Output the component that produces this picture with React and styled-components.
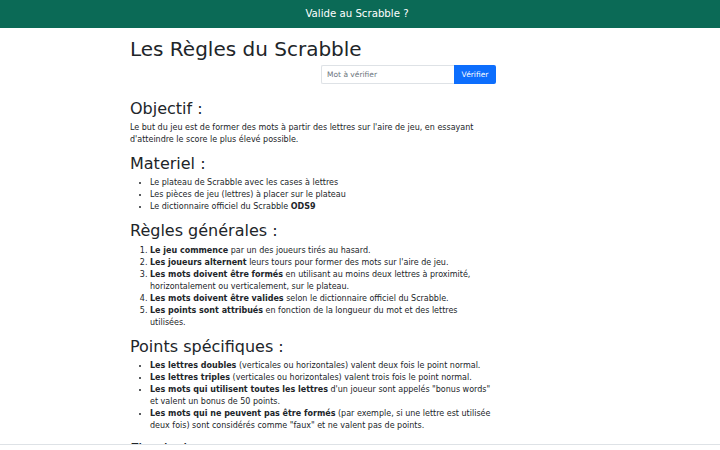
import styled, { createGlobalStyle } from "styled-components";

const GlobalStyle = createGlobalStyle`
  html, body {
    margin: 0;
    padding: 0;
    background: #ffffff;
  }
  body {
    font-family: "DejaVu Sans", "Noto Sans", sans-serif;
    font-size: 8px;
    line-height: 1.5;
    color: #212529;
  }
  * {
    box-sizing: border-box;
  }
`;

const NavBar = styled.header`
  height: 28px;
  background-color: #0b6a56;
  display: flex;
  align-items: center;
  justify-content: center;
`;

const Brand = styled.span`
  color: #ffffff;
  font-size: 10.2px;
  line-height: 1;
  padding-right: 6px;
`;

const Page = styled.main`
  width: 460px;
  margin: 0 auto;
  padding-top: 9px;
`;

const Column = styled.div`
  width: 362px;
`;

const Title = styled.h1`
  margin: 0 0 4px;
  font-size: 20px;
  font-weight: 500;
  line-height: 1.2;
`;

const SearchForm = styled.form`
  display: flex;
  justify-content: flex-end;
  margin-right: -4px;
  margin-bottom: 15px;
`;

const WordInput = styled.input`
  width: 133px;
  height: 19px;
  padding: 0 5px;
  border: 1px solid #dee2e6;
  border-right: none;
  border-radius: 2px 0 0 2px;
  font-family: inherit;
  font-size: 7.5px;
  color: #212529;
  outline: none;

  &::placeholder {
    color: #6c757d;
  }
`;

const CheckButton = styled.button`
  width: 42px;
  height: 19px;
  padding: 0;
  border: none;
  border-radius: 0 2px 2px 0;
  background-color: #0d6efd;
  color: #ffffff;
  font-family: inherit;
  font-size: 7.5px;
  cursor: pointer;
`;

const Section = styled.h2`
  margin: 0 0 4px;
  font-size: 16px;
  font-weight: 500;
  line-height: 1.2;
`;

const Text = styled.p`
  margin: 0 0 8px;
`;

const BulletList = styled.ul`
  margin: 0 0 8px;
  padding-left: 20px;
`;

const NumberList = styled.ol`
  margin: 0 0 8px;
  padding-left: 20px;
`;

const Footer = styled.footer`
  position: fixed;
  left: 0;
  right: 0;
  bottom: 0;
  height: 6px;
  background: #ffffff;
  border-top: 1px solid #dee2e6;
`;

const materiel = [
  ["", "Le plateau de Scrabble avec les cases à lettres"],
  ["", "Les pièces de jeu (lettres) à placer sur le plateau"],
];

const regles = [
  ["Le jeu commence", " par un des joueurs tirés au hasard."],
  ["Les joueurs alternent", " leurs tours pour former des mots sur l'aire de jeu."],
  [
    "Les mots doivent être formés",
    " en utilisant au moins deux lettres à proximité, horizontalement ou verticalement, sur le plateau.",
  ],
  ["Les mots doivent être valides", " selon le dictionnaire officiel du Scrabble."],
  [
    "Les points sont attribués",
    " en fonction de la longueur du mot et des lettres utilisées.",
  ],
];

const points = [
  ["Les lettres doubles", " (verticales ou horizontales) valent deux fois le point normal."],
  ["Les lettres triples", " (verticales ou horizontales) valent trois fois le point normal."],
  [
    "Les mots qui utilisent toutes les lettres",
    " d'un joueur sont appelés \"bonus words\" et valent un bonus de 50 points.",
  ],
  [
    "Les mots qui ne peuvent pas être formés",
    " (par exemple, si une lettre est utilisée deux fois) sont considérés comme \"faux\" et ne valent pas de points.",
  ],
];

const Item = ({ bold, rest }) => (
  <li>
    {bold && <strong>{bold}</strong>}
    {rest}
  </li>
);

const App = () => {
  return (
    <>
      <GlobalStyle />
      <NavBar>
        <Brand>Valide au Scrabble ?</Brand>
      </NavBar>
      <Page>
        <Column>
          <Title>Les Règles du Scrabble</Title>
          <SearchForm onSubmit={(e) => e.preventDefault()}>
            <WordInput type="text" placeholder="Mot à vérifier" />
            <CheckButton type="submit">Vérifier</CheckButton>
          </SearchForm>

          <Section>Objectif :</Section>
          <Text>
            Le but du jeu est de former des mots à partir des lettres sur l'aire de
            jeu, en essayant d'atteindre le score le plus élevé possible.
          </Text>

          <Section>Materiel :</Section>
          <BulletList>
            {materiel.map(([b, r], i) => (
              <Item key={i} bold={b} rest={r} />
            ))}
            <li>
              Le dictionnaire officiel du Scrabble <strong>ODS9</strong>
            </li>
          </BulletList>

          <Section>Règles générales :</Section>
          <NumberList>
            {regles.map(([b, r], i) => (
              <Item key={i} bold={b} rest={r} />
            ))}
          </NumberList>

          <Section>Points spécifiques :</Section>
          <BulletList>
            {points.map(([b, r], i) => (
              <Item key={i} bold={b} rest={r} />
            ))}
          </BulletList>

          <Section>Fin du jeu :</Section>
          <Text>
            La partie se termine lorsque toutes les lettres ont été tirées et qu'un
            joueur a posé toutes ses lettres.
          </Text>
        </Column>
      </Page>
      <Footer />
    </>
  );
};

export default App;
